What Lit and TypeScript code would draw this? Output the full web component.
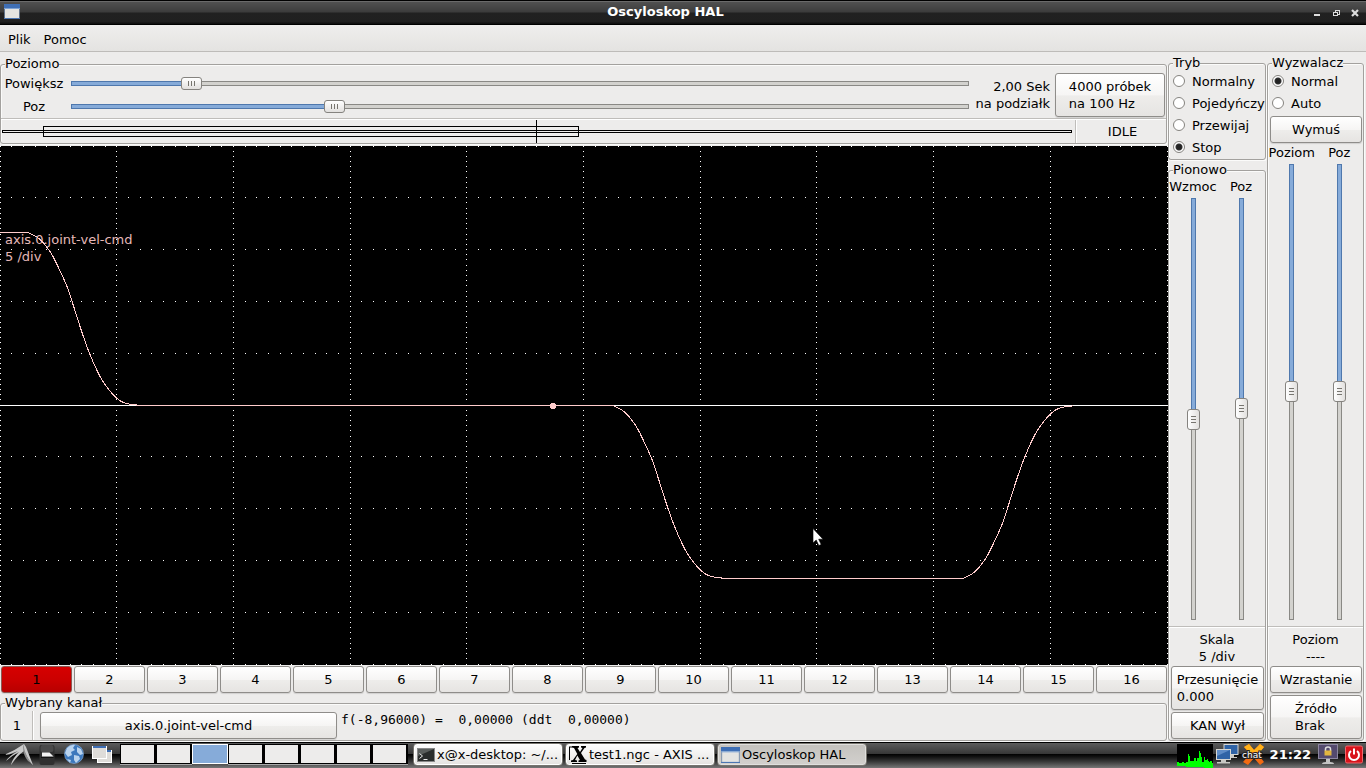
import { LitElement, html, css, svg } from "lit";
import { customElement, property, state } from "lit/decorators.js";
import { classMap } from "lit/directives/class-map.js";

const controls = css`
  *, *::before, *::after { box-sizing: border-box; }
  button {
    font: inherit;
    color: #000;
    margin: 0;
    padding: 0 4px;
    border: 1px solid #8f8d8a;
    border-radius: 3px;
    background: linear-gradient(#ffffff, #f6f5f4 50%, #eeedeb 52%, #e6e4e2);
    box-shadow: 0 1px 1px rgba(0, 0, 0, 0.12);
    height: 27px;
    white-space: nowrap;
    display: flex;
    align-items: center;
    justify-content: center;
    text-align: left;
  }
  button.tall { height: 44px; }
  fieldset {
    margin: 0;
    padding: 0;
    border: 1px solid #a3a19e;
    border-radius: 3px;
    min-width: 0;
    box-shadow: inset 1px 1px 0 #fbfbfa, 1px 1px 0 #fbfbfa;
  }
  legend {
    margin-left: 4px;
    padding: 0;
    line-height: 13px;
    height: 15px;
    background: #edeceb;
    white-space: nowrap;
  }
  .hsep { height: 2px; background: linear-gradient(#bfbdba 50%, #ffffff 50%); }
  .vsep { width: 2px; background: linear-gradient(90deg, #bfbdba 50%, #ffffff 50%); }
`;

@customElement("hal-slider")
class HalSlider extends LitElement {
  @property() label = "";
  @property({ type: Number }) value = 0;
  @property({ type: Boolean, reflect: true }) vertical = false;

  static styles = css`
    * { box-sizing: border-box; }
    :host { display: flex; align-items: center; min-width: 0; }
    :host([vertical]) { flex-direction: column; min-height: 0; }
    label { width: 66px; text-align: center; line-height: 17px; white-space: nowrap; flex: none; }
    :host([vertical]) label { width: auto; }
    input {
      appearance: none;
      -webkit-appearance: none;
      margin: 0 0 0 4px;
      padding: 0;
      background: none;
      height: 13px;
      flex: 1;
      min-width: 0;
      outline: none;
    }
    input::-webkit-slider-runnable-track {
      height: 5px;
      border: 1px solid transparent;
      background:
        linear-gradient(90deg, #86abd9 var(--fill), #d3d2ce var(--fill)) padding-box,
        linear-gradient(90deg, #4f78ad var(--fill), #8a8985 var(--fill)) border-box;
    }
    input::-webkit-slider-thumb {
      -webkit-appearance: none;
      width: 21px;
      height: 13px;
      margin-top: -5px;
      border: 1px solid #85837f;
      border-radius: 3px;
      background:
        linear-gradient(90deg, #77756f 1px, transparent 1px 3px, #77756f 3px 4px, transparent 4px 6px, #77756f 6px) center / 7px 5px no-repeat,
        linear-gradient(#ffffff, #e2e0de);
    }
    .vertical {
      writing-mode: vertical-lr;
      width: 13px;
      height: auto;
      margin: 3px 0 6px;
    }
    .vertical::-webkit-slider-runnable-track {
      height: auto;
      width: 5px;
      background:
        linear-gradient(#86abd9 var(--fill), #d3d2ce var(--fill)) padding-box,
        linear-gradient(#4f78ad var(--fill), #8a8985 var(--fill)) border-box;
    }
    .vertical::-webkit-slider-thumb {
      width: 13px;
      height: 21px;
      margin: 0 0 0 -5px;
      background:
        linear-gradient(#77756f 1px, transparent 1px 3px, #77756f 3px 4px, transparent 4px 6px, #77756f 6px) center / 5px 7px no-repeat,
        linear-gradient(90deg, #ffffff, #e2e0de);
    }
  `;

  render() {
    return html`
      <label for="range">${this.label}</label>
      <input id="range" type="range" min="0" max="100" step="0.1"
        class=${classMap({ vertical: this.vertical })}
        style="--fill:${this.value}%"
        .value=${String(this.value)}
        @input=${(e: Event) => { this.value = Number((e.target as HTMLInputElement).value); }}>
    `;
  }
}

const W = 1168;
const H = 519;

function gridDots(): string {
  const dx = (W - 1) / 100;
  const dy = (H - 1) / 100;
  let d = "";
  for (let row = 0; row <= 10; row++)
    for (let k = 0; k <= 100; k++)
      d += `M${Math.floor(k * dx + 0.001)} ${Math.floor(row * 10 * dy + 0.001)}h1v1h-1z`;
  for (let col = 0; col <= 10; col++)
    for (let k = 0; k <= 100; k++)
      d += `M${Math.floor(col * 10 * dx + 0.001)} ${Math.floor(k * dy + 0.001)}h1v1h-1z`;
  return d;
}

// Velocity ramp of the joint: offsets from the start of a deceleration.
const RAMP = [[0, 0], [11, 6], [22, 19], [30, 34], [39, 54], [46, 75], [54, 100], [62, 122], [72, 144], [80, 156], [89, 166], [98, 171], [108, 172]];

// Smooth curve through the ramp's points, shifted to x0, y0 and mirrored when dir is -1.
function ramp(x0: number, y0: number, dir: number): string {
  const p = RAMP.map(([x, y]) => [x0 + x, y0 + dir * y + 0.5]);
  let d = `L${p[0][0]} ${p[0][1]}`;
  for (let i = 0; i < p.length - 1; i++) {
    const a = p[Math.max(i - 1, 0)], b = p[i], c = p[i + 1], e = p[Math.min(i + 2, p.length - 1)];
    d += `C${b[0] + (c[0] - a[0]) / 6} ${b[1] + (c[1] - a[1]) / 6} ${c[0] - (e[0] - b[0]) / 6} ${c[1] - (e[1] - b[1]) / 6} ${c[0]} ${c[1]}`;
  }
  return d;
}

const TRACE =
  `M0 86.5${ramp(28, 86, 1)}L137 259.5${ramp(613, 259, 1)}L722 432.5${ramp(963, 432, -1)}L1073 259.5`;

@customElement("hal-scope")
class HalScope extends LitElement {
  static styles = css`
    :host { display: block; position: relative; background: #000; overflow: hidden; }
    .canvas { position: absolute; inset: 0; width: 100%; height: 100%; }
    .caption { position: absolute; left: 5px; top: 85px; line-height: 17px; color: #ffcccc; white-space: pre; opacity: 0.9; }
  `;

  render() {
    return html`
      <svg class="canvas" viewBox="0 0 ${W} ${H}" preserveAspectRatio="none" shape-rendering="crispEdges">
        <path d=${gridDots()} fill="#fff"></path>
        <path d="M0 259.5H${W}" stroke="#fff"></path>
        <path d=${TRACE} fill="none" stroke="#ffcccc"></path>
        <circle cx="553" cy="260" r="3" fill="#ffcccc"></circle>
        <path shape-rendering="auto" d="M813 382.500v14.500l3.200-3 2.600 5.500 2.400-1-2.500-5.300h4.300z" fill="#fff" stroke="#000" stroke-width=".6"></path>
      </svg>
      <div class="caption">axis.0.joint-vel-cmd
5 /div</div>
    `;
  }
}

const windowIcon = svg`
  <rect x="0.500" y="0.500" width="15" height="14" fill="#e4e4e2" stroke="#3d5f8f" stroke-opacity=".5"></rect>
  <rect x="0" y="0" width="16" height="4" fill="#3f6fb5"></rect>
  <rect x="0" y="4" width="16" height="1" fill="#7fa3d4"></rect>
  <rect x="0" y="14" width="16" height="1" fill="#4b76b3"></rect>`;

@customElement("desk-taskbar")
class DeskTaskbar extends LitElement {
  @state() desk = 2;

  static styles = css`
    * { box-sizing: border-box; }
    :host {
      display: flex;
      height: 26px;
      flex: none;
      border-top: 1px solid #000;
      background: linear-gradient(#5c5c5c, #383838 42%, #000 44%, #141414 56%, #3a3a3a 75%, #777 100%);
      color: #fff;
    }
    button { font: inherit; margin: 0; padding: 0; border: 0; background: none; color: #000; }
    svg { display: block; flex: none; }
    .launchers { display: flex; gap: 2px; padding: 0 6px 0 4px; }
    .launchers button { margin-right: 1px; }
    .launchers button:nth-child(n + 3) { margin-right: 0; }
    .desks { display: flex; padding-top: 1px; }
    .desk { width: 36px; height: 20px; background: #edeceb; border: 1px solid #000; border-right-width: 2px; box-shadow: 0 1px 0 #aaa; }
    .desk.on { background: #86abd9; border-color: #fff; border-right-width: 1px; box-shadow: none; }
    .tasks { display: flex; flex: 1; gap: 2px; padding-left: 5px; min-width: 0; }
    .task {
      width: 150px;
      height: 23px;
      display: flex;
      align-items: center;
      gap: 2px;
      padding: 0 4px 0 3px;
      border: 1px solid #77756f;
      border-radius: 4px;
      box-shadow: inset 0 0 0 1px #fff;
      background: linear-gradient(#fdfdfd, #f2f1f0 50%, #e4e2e0);
    }
    .task.on { background: linear-gradient(#c4c2be, #d2d0cd); box-shadow: inset 0 0 0 1px #e0dfdd; }
    .name { white-space: nowrap; line-height: 17px; }
    .tray { display: flex; }
    .clock { font-weight: bold; line-height: 23px; padding: 0 7px 0 3px; }
  `;

  render() {
    return html`
      <div class="launchers">
        <button aria-label="Menu"><svg width="30" height="25" viewBox="0 0 30 25">
          <path d="M0 12Q10 8 20 1L22 4 29 22Q25 19 20 8 13 13 7 22 8 16 15 9 9 12 2 18 5 13 14 8 8 11 0 12z" fill="#c9c9c9"></path>
          <path d="M20 1Q19 8 27 20L24 18Q19 12 19 4z" fill="#8e8e8e"></path>
        </svg></button>
        <button aria-label="Pliki"><svg width="22" height="25" viewBox="0 0 22 25">
          <rect x="2.500" y="2" width="15" height="20" rx="2" fill="#303030"></rect>
          <rect x="3.500" y="2" width="13" height="7" rx="2" fill="#4a4a4a"></rect>
          <path d="M5 9.500h7.500l4 4H5z" fill="#f2f2f2"></path><path d="M4 14h12.500v1H4z" fill="#111"></path>
        </svg></button>
        <button aria-label="Internet"><svg width="24" height="25" viewBox="0 0 24 25">
          <circle cx="12" cy="11" r="9.500" fill="#3c78bd"></circle>
          <path d="M5 5Q9 1 13 2L11 5 13 7 9 9 10 12 6 14 3 10zM15 4l4 2 2 5-3 1-3-3zM12 12l5 1 1 3-4 4-2-3zM5 16l4 1-1 3z" fill="#b9d3ee"></path>
          <circle cx="12" cy="11" r="9.500" fill="none" stroke="#8fb4dd" stroke-opacity=".6"></circle>
        </svg></button>
        <button aria-label="Pulpit"><svg width="26" height="25" viewBox="0 0 26 25">
          <rect x="9.500" y="7.500" width="14" height="12" fill="#dedcd9" stroke="#fff"></rect><rect x="10" y="7" width="13" height="2" fill="#3f6fb5"></rect>
          <rect x="4.500" y="3.500" width="14" height="12" fill="#dedcd9" stroke="#fff"></rect><rect x="5" y="3" width="13" height="2" fill="#3f6fb5"></rect>
        </svg></button>
      </div>
      <div class="desks">
        ${Array.from({ length: 8 }, (_, i) => html`
          <button class=${classMap({ desk: true, on: i === this.desk })} aria-label="Pulpit ${i + 1}"
            @click=${() => { this.desk = i; }}></button>`)}
      </div>
      <div class="tasks">
        <button class="task">
          <svg width="18" height="16" viewBox="0 0 18 16">
            <rect x="0.500" y="1.500" width="17" height="13" fill="#2a2d2c" stroke="#888"></rect>
            <path d="M1 2h16L1 9z" fill="#5a5e5c"></path>
            <path d="M2.500 6.500l3 2.500-3 2.500M6.500 12.500h4" stroke="#eee" fill="none"></path>
          </svg>
          <span class="name">x@x-desktop: ~/...</span>
        </button>
        <button class="task">
          <svg width="18" height="19" viewBox="0 0 18 19">
            <path d="M0.500 2v13M0 2h3" stroke="#000" fill="none"></path>
            <path d="M3 1h7v1.500l-1.500.5 2.500 4 2.500-4-1.500-.5V1h5v1.500l-1.500.5-3.500 5 4 6.500 1.500.5V17h-8v-1.500l1.500-.5-2.700-4.500L6 15l2 .5V17H2v-1.500l2-.5 4.300-6L5 3l-2-.5z" fill="#000"></path>
            <path d="M3 18.500h14" stroke="#000"></path>
          </svg>
          <span class="name">test1.ngc - AXIS ...</span>
        </button>
        <button class="task on">
          <svg width="19" height="16" viewBox="0 0 16 15" preserveAspectRatio="none">${windowIcon}</svg>
          <span class="name">Oscyloskop HAL</span>
        </button>
      </div>
      <div class="tray">
        <svg width="36" height="25" viewBox="0 0 36 25" shape-rendering="crispEdges">
          <rect y="1" width="36" height="22" fill="#000"></rect>
          <path d="M0 23v-4h2v1h3v-1h2v1h2v-1h2v-8h1v2h1v5h4v-3h2v3h1v-3h2v-7h1v2h1v4h1v5h2v-5h1v3h2v-1h1v2h1v1h1v-1h2v2h1v5z" fill="#00ff00"></path>
        </svg>
        <svg width="28" height="25" viewBox="0 0 28 25">
          <rect x="11" y="1.500" width="14" height="10" fill="#2f63a6" stroke="#d6d6d2"></rect>
          <path d="M16 12h5v2h3v1h-9z" fill="#c8c8c4"></path>
          <rect x="3.500" y="6.500" width="14" height="10" fill="#2f63a6" stroke="#d6d6d2"></rect>
          <path d="M4 7h13L4 13z" fill="#5d8bc6"></path>
          <path d="M8 17h5v2h4v1.500H4V19h4z" fill="#c8c8c4"></path>
        </svg>
        <svg width="26" height="25" viewBox="0 0 26 25">
          <path d="M3 4l5-3 5 6 6-6 4 3-6 7 6 8-4 3-6-7-6 7-5-3 7-8z" fill="#f26a12"></path>
          <path d="M3 4l5-3 5 6 6-6 4 3-4 5H8z" fill="#ffb21a"></path>
          <text x="1" y="15" font-size="9" fill="#fff" stroke="#222" stroke-width="2" paint-order="stroke">chat</text>
        </svg>
        <span class="clock">21:22</span>
        <svg width="20" height="25" viewBox="0 0 20 25">
          <rect x="0.500" y="1.500" width="19" height="14" fill="#544a6e" stroke="#8d87a0"></rect>
          <path d="M7.500 8V6Q7.500 4 10 4T12.500 6V8" fill="none" stroke="#ddd" stroke-width="1.500"></path>
          <rect x="6.500" y="7.500" width="7" height="5" fill="#e2b640"></rect>
          <path d="M8 16h4v3q4 0 4 2H4q0-2 4-2z" fill="#c4c4c4"></path>
        </svg>
        <svg width="28" height="25" viewBox="0 0 28 25">
          <rect x="7.500" y="3" width="17" height="17" rx="1.500" fill="#d8141c" stroke="#f0686c"></rect>
          <path d="M13 8a5 5 0 1 0 6 0M16 5.500v6" fill="none" stroke="#fff" stroke-width="2"></path>
        </svg>
      </div>
    `;
  }
}

@customElement("app-root")
class AppRoot extends LitElement {
  @state() channel = 1;

  static styles = [controls, css`
    :host {
      display: flex;
      flex-direction: column;
      height: 100vh;
      overflow: hidden;
      background: #edeceb;
      color: #000;
      font: 13px/17px "DejaVu Sans", sans-serif;
    }
    .titlebar {
      flex: none;
      display: flex;
      align-items: center;
      height: 25px;
      padding: 0 5px 2px 4px;
      border-top: 1px solid #000;
      border-bottom: 1px solid #000;
      background: linear-gradient(#6a6a6a 0 1px, #505050 1px, #3c3c3c 11px, #212121 12px, #202020 21px, #111 22px);
      color: #fff;
    }
    .title { flex: 1; margin: 0; text-align: center; font-size: 13px; font-weight: bold; }
    .wm { display: flex; gap: 5px; }
    .wm button { border: 0; background: none; box-shadow: none; padding: 0; width: 14px; height: 16px; }
    .menubar {
      flex: none;
      display: flex;
      gap: 13px;
      height: 27px;
      padding: 6px 8px 0;
      border-bottom: 1px solid #bebcb9;
      background: linear-gradient(#efeeed, #e4e3e1);
    }
    .menubar button { border: 0; background: none; box-shadow: none; padding: 0; height: 17px; }
    .main {
      flex: 1;
      min-height: 0;
      display: grid;
      grid-template-columns: minmax(0, 1fr) 98px 97px;
      column-gap: 1px;
      padding: 4px 2px 1px 0;
    }
    .left { display: flex; flex-direction: column; min-width: 0; min-height: 0; margin-right: -1px; padding-top: 1px; }
    .left fieldset { margin-right: 1px; }
    .side { display: flex; flex-direction: column; gap: 3px; min-width: 0; min-height: 0; }
    .grow { flex: 1; min-height: 0; display: flex; flex-direction: column; }
    .hrow { display: flex; height: 46px; }
    .zoomers { flex: 1; min-width: 0; display: flex; flex-direction: column; }
    .zoomers hal-slider { height: 23px; }
    .rate { width: 69px; margin-left: 12px; padding-top: 6px; display: flex; flex-direction: column; align-items: flex-end; white-space: nowrap; }
    .samples { width: 110px; margin: 1px 1px 0 5px; }
    .record { display: flex; height: 23px; }
    .record svg { flex: 1; min-width: 0; height: 23px; }
    .state { width: 89px; padding-left: 2px; text-align: center; line-height: 23px; }
    .scope { flex: 1; min-height: 0; margin-top: 2px; }
    .channels { display: flex; gap: 2px; padding: 1px; margin-bottom: 2px; }
    .channels button { flex: 1; min-width: 0; }
    .channels .on { background: linear-gradient(#d60000, #cc0000 50%, #b80000); border-color: #8c5a55; }
    .selected { display: flex; height: 29px; }
    .number { width: 31px; padding-left: 1px; text-align: center; line-height: 29px; }
    .source { width: 297px; margin: 1px 4px 0 6px; }
    .readout { font-family: "DejaVu Sans Mono", monospace; white-space: pre; }
    .radio { display: flex; align-items: center; gap: 7px; height: 22px; padding: 0 0 2px 4px; white-space: nowrap; }
    .radio input {
      appearance: none;
      -webkit-appearance: none;
      flex: none;
      margin: 0;
      width: 12px;
      height: 12px;
      border: 1px solid #85837f;
      border-radius: 50%;
      background: #fff;
    }
    .radio input:checked { background: radial-gradient(circle, #222 0 2px, #333 3px, #fff 4px); }
    .force { margin: 1px 1px 1px 2px; }
    .sliders { flex: 1; min-height: 0; display: grid; grid-template-columns: 1fr 1fr; grid-template-rows: minmax(0, 1fr); }
    .scale { text-align: center; padding: 3px 0 1px; }
    .stack { display: flex; flex-direction: column; gap: 2px; padding: 0 1px 1px 2px; }
  `];

  radio(group: string, label: string, checked = false) {
    return html`<label class="radio"><input type="radio" name=${group} ?checked=${checked}>${label}</label>`;
  }

  render() {
    return html`
      <header class="titlebar">
        <svg width="18" height="15" viewBox="0 0 18 15">${windowIcon}</svg>
        <h1 class="title">Oscyloskop HAL</h1>
        <div class="wm">
          <button aria-label="Minimalizuj"><svg width="14" height="16"><path d="M5 10h6v2H5z" fill="#ddd"></path></svg></button>
          <button aria-label="Przywróć"><svg width="14" height="16" shape-rendering="crispEdges"><path d="M7.500 8V6.500h4v4H10M5.500 8.500h4v3h-4z" fill="none" stroke="#ddd"></path></svg></button>
          <button aria-label="Zamknij"><svg width="14" height="16"><path d="M5 6l6 6M11 6l-6 6" stroke="#ddd" stroke-width="2.200"></path></svg></button>
        </div>
      </header>
      <nav class="menubar"><button>Plik</button><button>Pomoc</button></nav>
      <main class="main">
        <section class="left">
          <fieldset>
            <legend>Poziomo</legend>
            <div class="hrow">
              <div class="zoomers">
                <hal-slider label="Powiększ" .value=${12.4}></hal-slider>
                <hal-slider label="Poz" .value=${28.8}></hal-slider>
              </div>
              <div class="rate"><span>2,00 Sek</span><span>na podziałk</span></div>
              <button class="samples tall">4000 próbek<br>na 100 Hz</button>
            </div>
            <div class="hsep"></div>
            <div class="record">
              <svg viewBox="0 0 1074 23" preserveAspectRatio="none" shape-rendering="crispEdges" fill="none" stroke="#000">
                <rect x="1.500" y="10.500" width="1069" height="2"></rect>
                <rect x="42.500" y="6.500" width="535" height="10"></rect>
                <path d="M535.500 0v23"></path>
              </svg>
              <div class="vsep"></div>
              <div class="state">IDLE</div>
            </div>
          </fieldset>
          <hal-scope class="scope"></hal-scope>
          <div class="channels">
            ${Array.from({ length: 16 }, (_, i) => html`
              <button class=${classMap({ on: i + 1 === this.channel })}
                @click=${() => { this.channel = i + 1; }}>${i + 1}</button>`)}
          </div>
          <fieldset>
            <legend>Wybrany kanał</legend>
            <div class="selected">
              <span class="number">${this.channel}</span>
              <div class="vsep"></div>
              <button class="source">axis.0.joint-vel-cmd</button>
              <output class="readout">f(-8,96000) =  0,00000 (ddt  0,00000)</output>
            </div>
          </fieldset>
        </section>
        <section class="side">
          <fieldset>
            <legend>Tryb</legend>
            ${this.radio("mode", "Normalny")}
            ${this.radio("mode", "Pojedyńczy")}
            ${this.radio("mode", "Przewijaj")}
            ${this.radio("mode", "Stop", true)}
          </fieldset>
          <fieldset class="grow">
            <legend>Pionowo</legend>
            <div class="sliders">
              <hal-slider vertical label="Wzmoc" .value=${52.6}></hal-slider>
              <hal-slider vertical label="Poz" .value=${49.9}></hal-slider>
            </div>
            <div class="hsep"></div>
            <div class="scale">Skala<br>5 /div</div>
            <div class="stack">
              <button class="tall">Przesunięcie<br>0.000</button>
              <button>KAN Wył</button>
            </div>
          </fieldset>
        </section>
        <section class="side">
          <fieldset class="grow">
            <legend>Wyzwalacz</legend>
            ${this.radio("trigger", "Normal", true)}
            ${this.radio("trigger", "Auto")}
            <button class="force">Wymuś</button>
            <div class="sliders">
              <hal-slider vertical label="Poziom" .value=${49.9}></hal-slider>
              <hal-slider vertical label="Poz" .value=${49.9}></hal-slider>
            </div>
            <div class="hsep"></div>
            <div class="scale">Poziom<br>----</div>
            <div class="stack">
              <button>Wzrastanie</button>
              <button class="tall">Źródło<br>Brak</button>
            </div>
          </fieldset>
        </section>
      </main>
      <desk-taskbar></desk-taskbar>
    `;
  }
}
